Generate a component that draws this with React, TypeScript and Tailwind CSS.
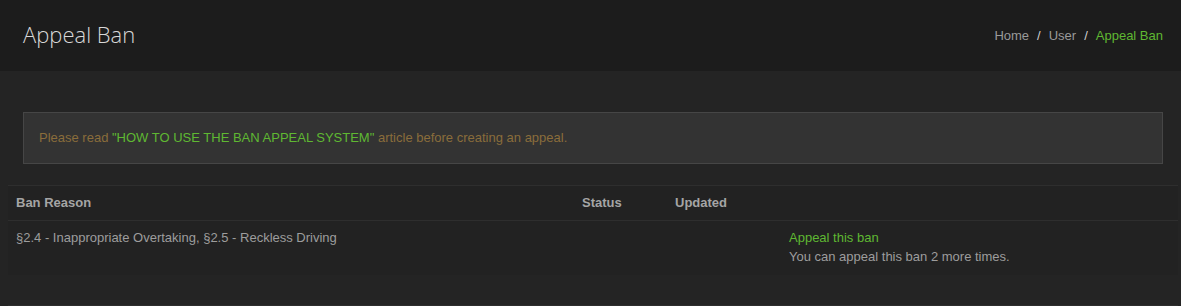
export default function App() {
  return (
    <div className="min-h-[306px] bg-[#242424] font-['Liberation_Sans',Arial,sans-serif] text-[13px] text-[#9d9d9d]">
      <header className="h-[71px] bg-[#1c1c1c] pl-[23px] pr-[18px] flex items-center justify-between">
        <h1 className="mb-[3px] font-['Open_Sans',sans-serif] font-light text-[22px] text-[#d8d8d8] leading-none">Appeal Ban</h1>
        <nav className="flex items-center gap-[8px] text-[13px]">
          <span className="text-[#9a9a9a]">Home</span>
          <span className="text-[#cfcfcf]">/</span>
          <span className="text-[#9a9a9a]">User</span>
          <span className="text-[#cfcfcf]">/</span>
          <span className="text-[#5fb832]">Appeal Ban</span>
        </nav>
      </header>

      <div className="pt-[41px]">
        <div className="ml-[23px] mr-[18px] h-[52px] border border-[#464646] bg-[#333333] px-[15px] flex items-center text-[#8a6d3b]">
          <p>
            Please read <a className="text-[#5fb832]">"HOW TO USE THE BAN APPEAL SYSTEM"</a> article before creating an appeal.
          </p>
        </div>

        <table className="mt-[21px] ml-[8px] w-[1170px] border-collapse bg-[#222222] text-left">
          <thead>
            <tr className="h-[35px] border-t border-b border-[#2e2e2e]">
              <th className="w-[566px] px-[8px] font-bold text-[#a5a5a5]">Ban Reason</th>
              <th className="w-[93px] px-[8px] font-bold text-[#a5a5a5]">Status</th>
              <th className="w-[114px] px-[8px] font-bold text-[#a5a5a5]">Updated</th>
              <th className="px-[8px]"></th>
            </tr>
          </thead>
          <tbody>
            <tr className="h-[54px] align-top">
              <td className="px-[8px] pt-[7px]">§2.4 - Inappropriate Overtaking, §2.5 - Reckless Driving</td>
              <td className="px-[8px]"></td>
              <td className="px-[8px]"></td>
              <td className="px-[8px] pt-[7px] leading-[19px]">
                <a className="block text-[#5fb832]">Appeal this ban</a>
                <span className="block">You can appeal this ban 2 more times.</span>
              </td>
            </tr>
          </tbody>
        </table>

        <div className="mt-[30px] ml-[8px] w-[1170px] border-t border-[#2e2e2e]"></div>
      </div>
    </div>
  )
}
